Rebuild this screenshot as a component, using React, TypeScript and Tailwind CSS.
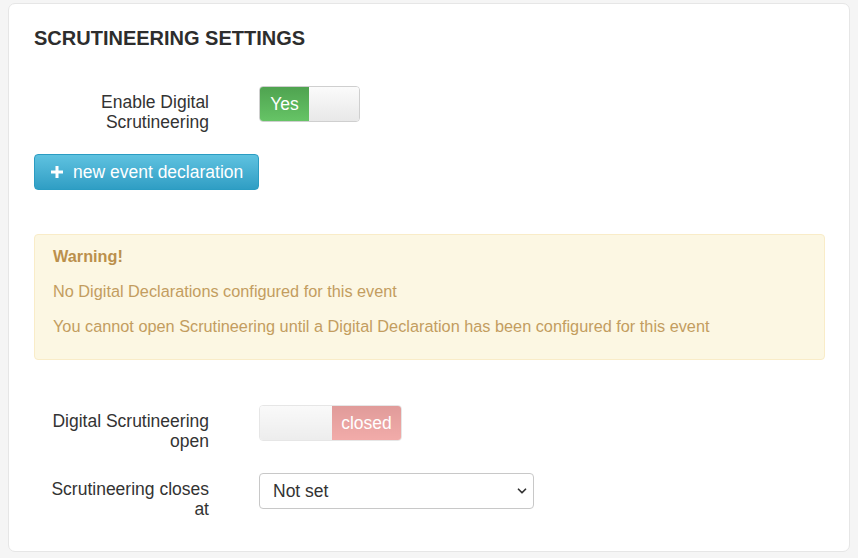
import { ChevronDown } from "lucide-react";

const font = { fontFamily: '"Liberation Sans", Arial, sans-serif' };

function PlusIcon() {
  return (
    <svg width="12" height="12" viewBox="0 0 12 12" className="shrink-0">
      <rect x="4.5" y="0" width="3" height="12" fill="white" />
      <rect x="0" y="4.5" width="12" height="3" fill="white" />
    </svg>
  );
}

function FormRow({ label, children }: { label: string; children: React.ReactNode }) {
  return (
    <div className="mb-[22px] flex items-start">
      <label className="w-[175px] shrink-0 pl-[8px] pt-[6px] text-right text-[17.5px] leading-[20px] text-[#333]">
        {label}
      </label>
      <div className="ml-[50px]">{children}</div>
    </div>
  );
}

export default function App() {
  return (
    <div className="min-h-[558px] bg-[#f5f5f5] pl-[8px] pr-[8px] pt-[3px] pb-[6px]" style={font}>
      <div className="w-[842px] rounded-[7px] border border-[#e6e6e6] bg-white pb-[10px] pl-[25px] pr-[24px] pt-[23px]">
        <h2 className="mb-[37px] text-[20px] font-bold leading-[22px] text-[#2d2d2d]">
          SCRUTINEERING SETTINGS
        </h2>

        <FormRow label="Enable Digital Scrutineering">
          <div className="flex h-[36px] w-[101px] overflow-hidden rounded-[4px] border border-[#cfcfcf]">
            <div className="flex w-[49px] items-center justify-center bg-gradient-to-b from-[#4fa350] to-[#66c466] text-[17.5px] text-white">
              Yes
            </div>
            <div className="flex-1 bg-gradient-to-b from-[#fbfbfb] to-[#e8e8e8]" />
          </div>
        </FormRow>

        <button className="flex h-[36px] w-[225px] items-center gap-[10px] rounded-[4px] border border-[#2b9cc2] bg-gradient-to-b from-[#5ec2e0] to-[#2f9ec4] pl-[16px] text-[17.5px] text-white">
          <PlusIcon />
          <span>new event declaration</span>
        </button>

        <div className="mt-[44px] rounded-[4px] border border-[#f9ecc8] bg-[#fcf7e3] pb-[22px] pl-[18px] pt-[10px] text-[16.3px] leading-[22px] text-[#c39d5f]">
          <p className="mb-[13px] font-bold text-[#bb904c]">Warning!</p>
          <p className="mb-[13px]">No Digital Declarations configured for this event</p>
          <p>You cannot open Scrutineering until a Digital Declaration has been configured for this event</p>
        </div>

        <div className="mt-[45px]">
          <FormRow label="Digital Scrutineering open">
            <div className="flex h-[36px] w-[143px] overflow-hidden rounded-[4px] border border-[#cfcfcf] opacity-50">
              <div className="w-[72px] bg-gradient-to-b from-[#f6f6f6] to-[#dcdcdc]" />
              <div className="flex flex-1 items-center justify-center bg-gradient-to-b from-[#c33a37] to-[#e65a56] text-[17.5px] text-white">
                closed
              </div>
            </div>
          </FormRow>

          <FormRow label="Scrutineering closes at">
            <div className="relative h-[36px] w-[275px]">
              <select
                className="h-full w-full appearance-none rounded-[4px] border border-[#c8c8c8] bg-white pl-[13px] text-[17.5px] text-[#333]"
                style={font}
                defaultValue="notset"
              >
                <option value="notset">Not set</option>
              </select>
              <ChevronDown
                className="pointer-events-none absolute right-[5px] top-[11px] size-[14px] text-[#333]"
                strokeWidth={3}
              />
            </div>
          </FormRow>
        </div>
      </div>
    </div>
  );
}
